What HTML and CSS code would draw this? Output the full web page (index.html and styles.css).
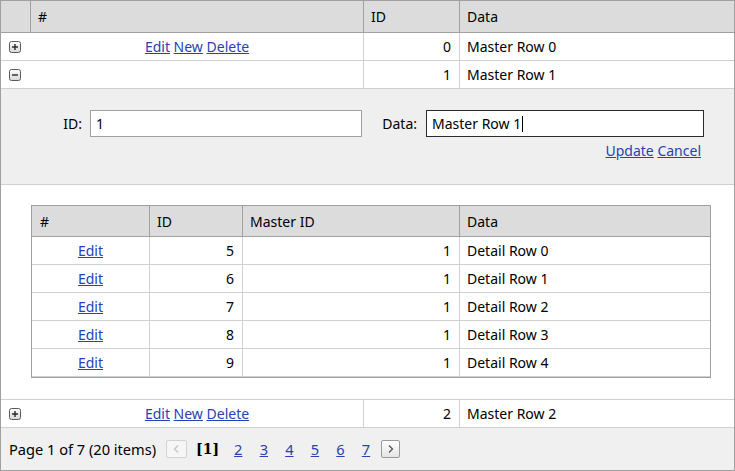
FILE: index.html
```html
<!DOCTYPE html>
<html>
<head>
<meta charset="utf-8">
<link rel="stylesheet" href="styles.css">
</head>
<body>
<div class="grid">
  <div class="mrow mhead">
    <div class="cell exp"></div>
    <div class="cell">#</div>
    <div class="cell">ID</div>
    <div class="cell">Data</div>
  </div>
  <div class="mrow">
    <div class="cell exp">
      <svg class="expbtn" width="12" height="12" viewBox="0 0 12 12"><defs><linearGradient id="g1" x1="0" y1="0" x2="0" y2="1"><stop offset="0" stop-color="#fdfdfd"/><stop offset="1" stop-color="#d8d8d8"/></linearGradient></defs><rect x="0.5" y="0.5" width="11" height="11" rx="2" fill="url(#g1)" stroke="#5a5a5a"/><path d="M3 6H9M6 3V9" stroke="#2a2a2a" stroke-width="1.4"/></svg>
    </div>
    <div class="cell cmd"><span><a href="#">Edit</a> <a href="#">New</a> <a href="#">Delete</a></span></div>
    <div class="cell num">0</div>
    <div class="cell">Master Row 0</div>
  </div>
  <div class="mrow">
    <div class="cell exp">
      <svg class="expbtn" width="12" height="12" viewBox="0 0 12 12"><defs><linearGradient id="g2" x1="0" y1="0" x2="0" y2="1"><stop offset="0" stop-color="#fdfdfd"/><stop offset="1" stop-color="#d8d8d8"/></linearGradient></defs><rect x="0.5" y="0.5" width="11" height="11" rx="2" fill="url(#g2)" stroke="#5a5a5a"/><path d="M3 6H9" stroke="#2a2a2a" stroke-width="1.4"/></svg>
    </div>
    <div class="cell"></div>
    <div class="cell num">1</div>
    <div class="cell">Master Row 1</div>
  </div>
  <div class="editform">
    <div class="flabel">ID:</div>
    <div class="textbox">1</div>
    <div class="flabel flabel2">Data:</div>
    <div class="textbox focused">Master Row 1<span class="caret"></span></div>
    <div class="formlinks"><a href="#">Update</a> <a href="#">Cancel</a></div>
  </div>
  <div class="detail">
    <div class="dgrid">
      <div class="drow dhead">
        <div class="cell">#</div>
        <div class="cell">ID</div>
        <div class="cell">Master ID</div>
        <div class="cell">Data</div>
      </div>
      <div class="drow"><div class="cell cmd"><a href="#">Edit</a></div><div class="cell num">5</div><div class="cell num">1</div><div class="cell">Detail Row 0</div></div>
      <div class="drow"><div class="cell cmd"><a href="#">Edit</a></div><div class="cell num">6</div><div class="cell num">1</div><div class="cell">Detail Row 1</div></div>
      <div class="drow"><div class="cell cmd"><a href="#">Edit</a></div><div class="cell num">7</div><div class="cell num">1</div><div class="cell">Detail Row 2</div></div>
      <div class="drow"><div class="cell cmd"><a href="#">Edit</a></div><div class="cell num">8</div><div class="cell num">1</div><div class="cell">Detail Row 3</div></div>
      <div class="drow"><div class="cell cmd"><a href="#">Edit</a></div><div class="cell num">9</div><div class="cell num">1</div><div class="cell">Detail Row 4</div></div>
    </div>
  </div>
  <div class="mrow">
    <div class="cell exp">
      <svg class="expbtn" width="12" height="12" viewBox="0 0 12 12"><defs><linearGradient id="g3" x1="0" y1="0" x2="0" y2="1"><stop offset="0" stop-color="#fdfdfd"/><stop offset="1" stop-color="#d8d8d8"/></linearGradient></defs><rect x="0.5" y="0.5" width="11" height="11" rx="2" fill="url(#g3)" stroke="#5a5a5a"/><path d="M3 6H9M6 3V9" stroke="#2a2a2a" stroke-width="1.4"/></svg>
    </div>
    <div class="cell cmd"><span><a href="#">Edit</a> <a href="#">New</a> <a href="#">Delete</a></span></div>
    <div class="cell num">2</div>
    <div class="cell">Master Row 2</div>
  </div>
  <div class="pager">
    <span class="summary">Page 1 of 7 (20 items)</span>
    <span class="pbtn disabled"><svg width="19" height="16" viewBox="0 0 19 16"><path d="M11 4.5L7.5 8L11 11.5" fill="none" stroke="#c4c4c4" stroke-width="1.3"/></svg></span>
    <span class="pcur">[1]</span>
    <a class="pnum first" href="#">2</a>
    <a class="pnum" href="#">3</a>
    <a class="pnum" href="#">4</a>
    <a class="pnum" href="#">5</a>
    <a class="pnum" href="#">6</a>
    <a class="pnum" href="#">7</a>
    <span class="pbtn next"><svg width="17" height="16" viewBox="0 0 17 16"><path d="M7 4.5L10.5 8L7 11.5" fill="none" stroke="#555" stroke-width="1.3"/></svg></span>
  </div>
</div>
</body>
</html>
```

FILE: styles.css
```css
* { box-sizing: border-box; }
body {
  margin: 0;
  font-family: "Noto Sans", "Open Sans", sans-serif;
  font-size: 14px;
  color: #000;
  background: #fff;
}
a { color: #2741b7; text-decoration: underline; }

.grid {
  width: 735px;
  height: 471px;
  border: 1px solid #a0a0a0;
  display: flex;
  flex-direction: column;
}

.mrow {
  display: grid;
  grid-template-columns: 30px 333px 96px 1fr;
  height: 28px;
  flex: none;
  border-bottom: 1px solid #d0d0d0;
}
.mhead {
  height: 32px;
  background: #dcdcdc;
  border-bottom-color: #a0a0a0;
}
.cell {
  display: flex;
  align-items: center;
  padding: 0 7px;
  white-space: nowrap;
  border-right: 1px solid #d0d0d0;
  min-width: 0;
}
.cell:last-child { border-right: 0; }
.mhead .cell { border-right-color: #a0a0a0; }
.mhead .cell:last-child { border-right: 0; }
.mrow .exp { padding: 0 0 0 8px; border-right: 0; }
.mhead .exp { border-right: 1px solid #a0a0a0; }
.expbtn { display: block; }
.num { justify-content: flex-end; padding-right: 8px; }
.cmd { justify-content: center; white-space: pre; }

.editform {
  height: 96px;
  flex: none;
  background: #efefef;
  border-bottom: 1px solid #d0d0d0;
  padding-top: 21px;
  display: grid;
  grid-template-columns: 89px 272px 64px 278px;
  grid-template-rows: 27px auto;
  align-content: start;
}
.flabel {
  align-self: center;
  text-align: right;
  padding-right: 8px;
}
.flabel2 { padding-right: 9px; }
.textbox {
  height: 27px;
  border: 1px solid #a0a0a0;
  background: #fff;
  padding-left: 5px;
  display: flex;
  align-items: center;
  white-space: pre;
}
.textbox.focused { border-color: #2b2b2b; }
.caret {
  display: inline-block;
  width: 1px;
  height: 16px;
  background: #000;
  margin-left: 1px;
}
.formlinks {
  grid-column: 1 / 5;
  justify-self: end;
  margin-right: 3px;
  margin-top: 4px;
  line-height: 19px;
  white-space: pre;
}

.detail {
  height: 215px;
  flex: none;
  border-bottom: 1px solid #d0d0d0;
  padding: 20px 23px 0 30px;
}
.dgrid {
  border: 1px solid #a0a0a0;
}
.drow {
  display: grid;
  grid-template-columns: 118px 93px 217px 1fr;
  height: 28px;
  border-bottom: 1px solid #d0d0d0;
}
.dhead {
  height: 31px;
  background: #dcdcdc;
  border-bottom-color: #a0a0a0;
}
.dhead .cell { border-right-color: #a0a0a0; }
.dhead .cell:last-child { border-right: 0; }
.dhead .cell:first-child { padding-left: 8px; }

.pager {
  flex: 1;
  background: #f0f0f0;
  display: flex;
  align-items: center;
  padding-left: 8px;
  white-space: nowrap;
}
.summary { font-size: 14.6px; }
.pbtn {
  display: flex;
  align-items: center;
  justify-content: center;
  height: 18px;
  border: 1px solid #a0a0a0;
  border-radius: 2px;
  background: linear-gradient(#ffffff, #e4e4e4);
}
.pbtn.disabled {
  width: 21px;
  margin-left: 10px;
  border-color: #d2d2d2;
  background: #f6f6f6;
}
.pbtn.next {
  width: 19px;
  margin-left: 11px;
  border-color: #9a9a9a;
}
.pcur {
  margin-left: 9px;
  font-family: "DejaVu Serif", "Liberation Serif", serif;
  font-weight: bold;
  font-size: 14px;
}
.pnum { margin-left: 17.2px; font-size: 14.6px; }
.pnum.first { margin-left: 15px; }
```
